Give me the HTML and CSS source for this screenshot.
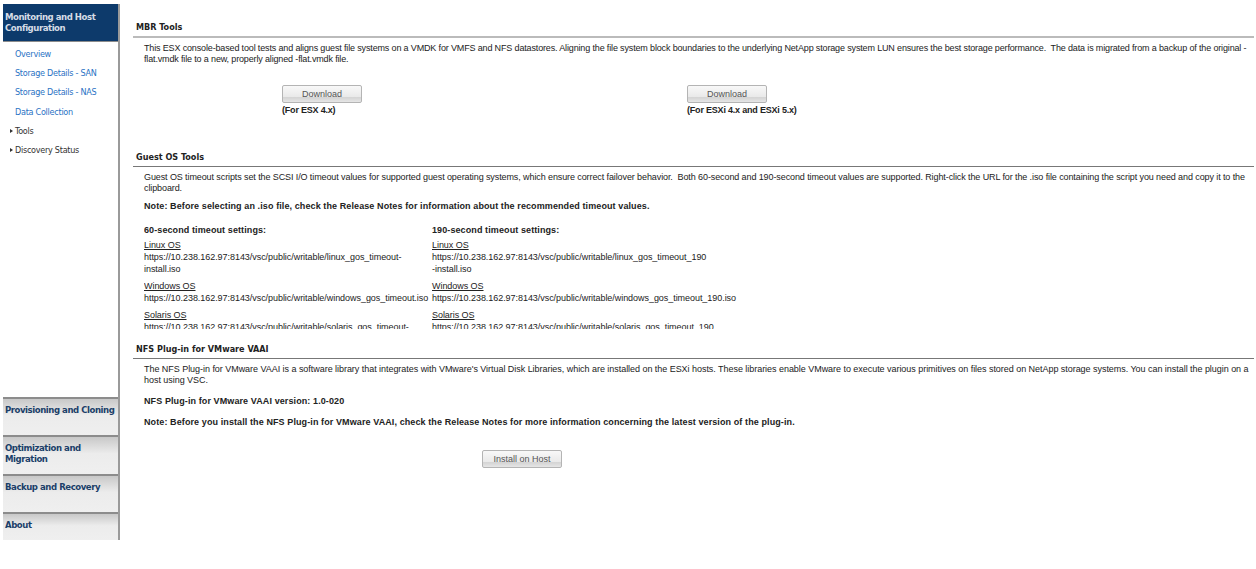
FILE: index.html

```html
<!DOCTYPE html>
<html lang="en">
<head>
  <meta charset="UTF-8">
  <title>Tools</title>
  <link rel="stylesheet" href="styles.css">
</head>
<body>
<div class="page">
  <div class="sidebar">
    <div class="panel-head active">Monitoring and Host Configuration</div>
    <ul class="nav">
      <li><a href="#">Overview</a></li>
      <li><a href="#">Storage Details - SAN</a></li>
      <li><a href="#">Storage Details - NAS</a></li>
      <li><a href="#">Data Collection</a></li>
      <li class="tree">Tools</li>
      <li class="tree">Discovery Status</li>
    </ul>
    <div class="panel-head">Provisioning and Cloning</div>
    <div class="panel-head">Optimization and Migration</div>
    <div class="panel-head">Backup and Recovery</div>
    <div class="panel-head last">About</div>
  </div>

  <div class="content">
    <div class="section mbr">
      <h3>MBR Tools</h3>
      <div class="body">
        <p>This ESX console-based tool tests and aligns guest file systems on a VMDK for VMFS and NFS datastores. Aligning the file system block boundaries to the underlying NetApp storage system LUN ensures the best storage performance.&nbsp; The data is migrated from a backup of the original -flat.vmdk file to a new, properly aligned -flat.vmdk file.</p>
        <div class="downloads">
          <div class="dl first">
            <button>Download</button>
            <strong>(For ESX 4.x)</strong>
          </div>
          <div class="dl">
            <button>Download</button>
            <strong>(For ESXi 4.x and ESXi 5.x)</strong>
          </div>
        </div>
      </div>
    </div>

    <div class="section guest">
      <h3>Guest OS Tools</h3>
      <div class="body">
        <p>Guest OS timeout scripts set the SCSI I/O timeout values for supported guest operating systems, which ensure correct failover behavior.&nbsp; Both 60-second and 190-second timeout values are supported. Right-click the URL for the .iso file containing the script you need and copy it to the clipboard.</p>
        <p class="note">Note: Before selecting an .iso file, check the Release Notes for information about the recommended timeout values.</p>
        <div class="scroller">
          <div class="col">
            <h4>60-second timeout settings:</h4>
            <div class="os"><u>Linux OS</u><br>https://10.238.162.97:8143/vsc/public/writable/linux_gos_timeout-<br>install.iso</div>
            <div class="os"><u>Windows OS</u><br>https://10.238.162.97:8143/vsc/public/writable/windows_gos_timeout.iso</div>
            <div class="os"><u>Solaris OS</u><br>https://10.238.162.97:8143/vsc/public/writable/solaris_gos_timeout-<br>install.iso</div>
          </div>
          <div class="col">
            <h4>190-second timeout settings:</h4>
            <div class="os"><u>Linux OS</u><br>https://10.238.162.97:8143/vsc/public/writable/linux_gos_timeout_190<br>-install.iso</div>
            <div class="os"><u>Windows OS</u><br>https://10.238.162.97:8143/vsc/public/writable/windows_gos_timeout_190.iso</div>
            <div class="os"><u>Solaris OS</u><br>https://10.238.162.97:8143/vsc/public/writable/solaris_gos_timeout_190<br>-install.iso</div>
          </div>
        </div>
      </div>
    </div>

    <div class="section">
      <h3>NFS Plug-in for VMware VAAI</h3>
      <div class="body">
        <p class="nfs-intro">The NFS Plug-in for VMware VAAI is a software library that integrates with VMware's Virtual Disk Libraries, which are installed on the ESXi hosts. These libraries enable VMware to execute various primitives on files stored on NetApp storage systems. You can install the plugin on a host using VSC.</p>
        <p class="note version">NFS Plug-in for VMware VAAI version: 1.0-020</p>
        <p class="note version">Note: Before you install the NFS Plug-in for VMware VAAI, check the Release Notes for more information concerning the latest version of the plug-in.</p>
        <button class="install">Install on Host</button>
      </div>
    </div>
  </div>
</div>
</body>
</html>
```

FILE: styles.css

```css
html, body {
  margin: 0;
  padding: 0;
  background: #fff;
}
body {
  font-family: "Liberation Sans", Arial, sans-serif;
  font-size: 9px;
  line-height: 11px;
  letter-spacing: -0.1px;
  color: #222;
  overflow: hidden;
}
.page {
  display: flex;
  align-items: flex-start;
}

/* left accordion */
.sidebar {
  width: 115px;
  height: 536px;
  margin: 4px 0 0 3px;
  border-right: 2px solid #9a9a9a;
  flex-shrink: 0;
  display: flex;
  flex-direction: column;
}
.panel-head {
  height: 38.5px;
  box-sizing: border-box;
  padding: 6px 2px 0 2px;
  border-top: 2px solid #8c8c8c;
  background: linear-gradient(#c8c8c8, #ececec 45%, #efefef);
  color: #1b3f69;
  font-family: "DejaVu Sans Condensed", "DejaVu Sans", sans-serif;
  font-weight: bold;
  font-size: 9.5px;
  line-height: 10.5px;
  letter-spacing: -0.45px;
}
.panel-head.active {
  background: #0d3a6b;
  color: #d5dce6;
  border-top: 0;
  border-bottom: 1px solid #8c8c8c;
  padding-top: 8px;
  height: 38px;
}
.panel-head.last {
  height: 28px;
}
.nav {
  list-style: none;
  margin: 0;
  padding: 3px 0 0 12px;
  flex: 1;
}
.nav li {
  height: 19.2px;
  line-height: 19px;
  font-size: 9px;
  color: #333;
  font-family: "DejaVu Sans Condensed", "DejaVu Sans", sans-serif;
  letter-spacing: -0.27px;
}
.nav a {
  color: #2a72c4;
  text-decoration: none;
}
.nav .tree {
  position: relative;
}
.nav .tree::before {
  content: "";
  position: absolute;
  left: -5px;
  top: 7px;
  border-left: 3px solid #333;
  border-top: 2px solid transparent;
  border-bottom: 2px solid transparent;
}

/* main area */
.content {
  flex: 1;
  padding: 22px 2px 0 13px;
  min-width: 0;
}
.section h3 {
  margin: 0;
  padding: 0 0 3px 3px;
  border-bottom: 1px solid #777;
  font-family: "DejaVu Sans Condensed", "DejaVu Sans", sans-serif;
  font-size: 9px;
  line-height: 11px;
  letter-spacing: 0;
  color: #222;
}
.section.mbr h3 {
  border-bottom: 2px solid #bbb;
}
.section.mbr {
  height: 130px;
}
.section.mbr p {
  letter-spacing: -0.15px;
}
.section.guest {
  height: 192px;
}
.body {
  padding: 5px 2px 0 11px;
}
.body p {
  margin: 0;
}
.body .nfs-intro {
  letter-spacing: -0.04px;
}
.body .note {
  margin-top: 7px;
  font-weight: bold;
  letter-spacing: 0.1px;
}
.body .version {
  margin-top: 10px;
}
.downloads {
  display: flex;
  margin-top: 20px;
}
.dl {
  display: flex;
  flex-direction: column;
  align-items: flex-start;
  width: 405px;
}
.dl.first {
  margin-left: 138px;
}
.dl strong {
  margin-top: 2px;
  letter-spacing: -0.2px;
}
button {
  display: block;
  width: 80px;
  height: 18px;
  padding: 0;
  border: 1px solid #b4b4b4;
  border-radius: 2px;
  background: linear-gradient(#f8f8f8, #e9e9e9 70%, #d4d4d4 72%, #e6e6e6);
  font-family: "Liberation Sans", Arial, sans-serif;
  font-size: 9px;
  color: #555;
}
.install {
  margin: 22px 0 0 338px;
}
.scroller {
  display: flex;
  height: 104px;
  overflow: hidden;
  margin-top: 13px;
}
.col {
  width: 288px;
  flex-shrink: 0;
}
.col h4 {
  margin: 0 0 3px;
  font-size: 9px;
  line-height: 11px;
  letter-spacing: 0.1px;
}
.os {
  margin-bottom: 5px;
  line-height: 12px;
  letter-spacing: -0.05px;
}
```
